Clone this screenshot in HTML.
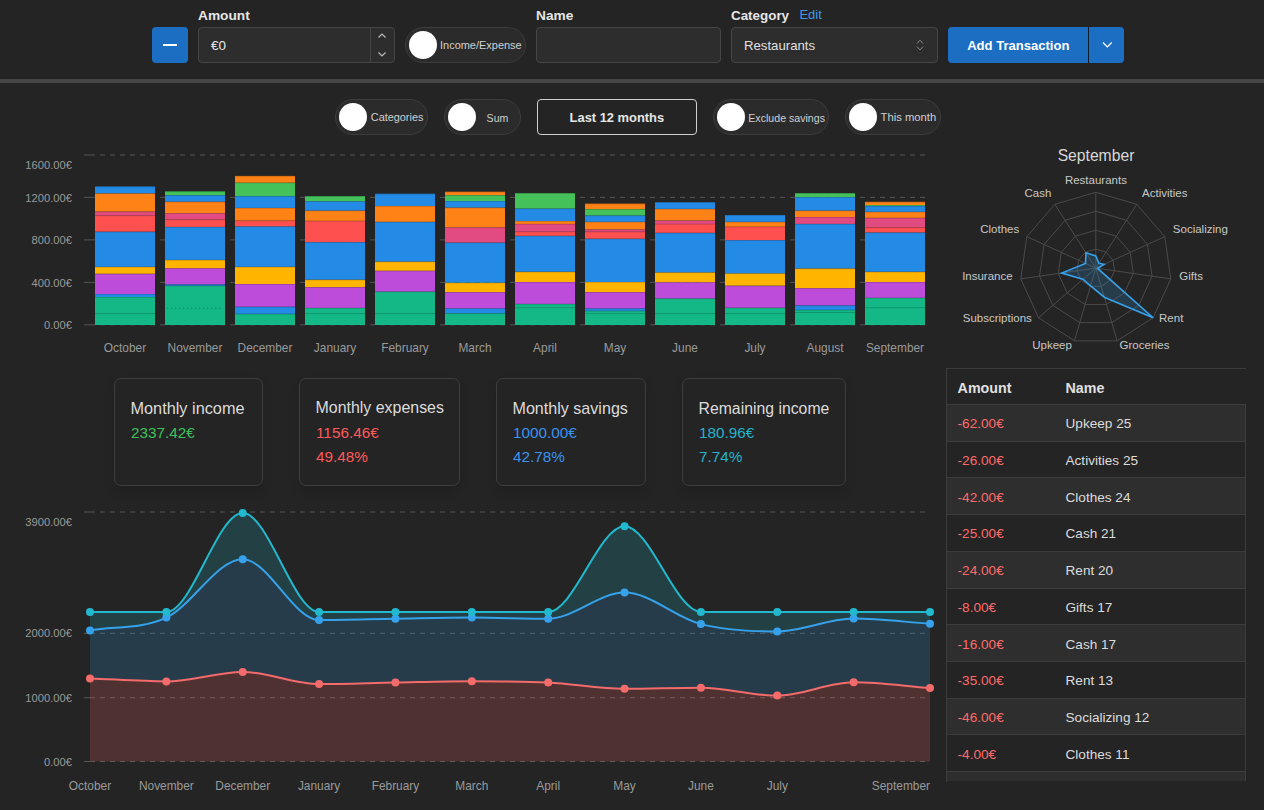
<!DOCTYPE html><html><head><meta charset="utf-8"><style>
html,body{margin:0;padding:0;}
body{width:1264px;height:810px;overflow:hidden;background:#242424;font-family:"Liberation Sans", sans-serif;position:relative;}
svg text{font-family:"Liberation Sans", sans-serif;}
</style></head><body>
<div style="position:absolute;left:198.00px;top:8.90px;font-size:13.7px;line-height:13.7px;color:#e6e6e6;font-weight:bold;white-space:nowrap;">Amount</div>
<div style="position:absolute;left:536.00px;top:8.90px;font-size:13.7px;line-height:13.7px;color:#e6e6e6;font-weight:bold;white-space:nowrap;">Name</div>
<div style="position:absolute;left:731.00px;top:9.16px;font-size:13.4px;line-height:13.4px;color:#e6e6e6;font-weight:bold;white-space:nowrap;">Category</div>
<div style="position:absolute;left:799.50px;top:8.78px;font-size:12.9px;line-height:12.9px;color:#3d9be9;white-space:nowrap;">Edit</div>
<div style="position:absolute;left:152px;top:27px;width:36px;height:36px;background:#1b6ec2;border-radius:4px;"></div>
<div style="position:absolute;left:163px;top:44px;width:14px;height:2px;background:#fff;"></div>
<div style="position:absolute;left:198px;top:27px;width:195px;height:34px;background:#2d2d2d;border:1px solid #454545;border-radius:4px;"></div>
<div style="position:absolute;left:370px;top:28px;width:1px;height:34px;background:#454545;"></div>
<div style="position:absolute;left:211.00px;top:39.07px;font-size:13.5px;line-height:13.5px;color:#e8e8e8;white-space:nowrap;">€0</div>
<svg style="position:absolute;left:374px;top:28px" width="18" height="34"><path d="M4.5 9.5 L8 6 L11.5 9.5" fill="none" stroke="#bbb" stroke-width="1.2"/><path d="M4.5 24.5 L8 28 L11.5 24.5" fill="none" stroke="#bbb" stroke-width="1.2"/></svg>
<div style="position:absolute;left:405px;top:27px;width:119px;height:34px;background:#2b2b2b;border:1px solid #3c3c3c;border-radius:18px;"></div>
<div style="position:absolute;left:408.6px;top:30.8px;width:28px;height:28px;background:#fff;border-radius:50%;"></div>
<div style="position:absolute;left:440.00px;top:40.41px;font-size:10.97px;line-height:10.97px;color:#d0d0d0;white-space:nowrap;">Income/Expense</div>
<div style="position:absolute;left:536px;top:27px;width:183px;height:34px;background:#2d2d2d;border:1px solid #454545;border-radius:4px;"></div>
<div style="position:absolute;left:731px;top:27px;width:205px;height:34px;background:#2d2d2d;border:1px solid #454545;border-radius:4px;"></div>
<div style="position:absolute;left:744.00px;top:39.33px;font-size:13.2px;line-height:13.2px;color:#e0e0e0;white-space:nowrap;">Restaurants</div>
<svg style="position:absolute;left:912px;top:36px" width="14" height="18"><path d="M5 7.5 L8 4.2 L11 7.5" fill="none" stroke="#8a8a8a" stroke-width="1"/><path d="M5 10.6 L8 13.9 L11 10.6" fill="none" stroke="#8a8a8a" stroke-width="1"/></svg>
<div style="position:absolute;left:948px;top:27px;width:176px;height:36px;background:#1b6ec2;border-radius:4px;"></div>
<div style="position:absolute;left:1088px;top:27px;width:1.3px;height:36px;background:#111d2b;"></div>
<div style="position:absolute;left:967.20px;top:39.25px;font-size:13.05px;line-height:13.05px;color:#ffffff;font-weight:bold;white-space:nowrap;">Add Transaction</div>
<svg style="position:absolute;left:1098px;top:38px" width="16" height="14"><path d="M5 4.5 L9.3 9 L13.7 4.5" fill="none" stroke="#fff" stroke-width="1.2"/></svg>
<div style="position:absolute;left:0px;top:79px;width:1264px;height:4px;background:#454545;"></div>
<div style="position:absolute;left:335px;top:99px;width:91px;height:34px;background:#2b2b2b;border:1px solid #3c3c3c;border-radius:18px;"></div>
<div style="position:absolute;left:338.6px;top:102.8px;width:28px;height:28px;background:#fff;border-radius:50%;"></div>
<div style="position:absolute;left:370.80px;top:112.49px;font-size:10.88px;line-height:10.88px;color:#d0d0d0;white-space:nowrap;">Categories</div>
<div style="position:absolute;left:444px;top:99px;width:75px;height:34px;background:#2b2b2b;border:1px solid #3c3c3c;border-radius:18px;"></div>
<div style="position:absolute;left:447.6px;top:102.8px;width:28px;height:28px;background:#fff;border-radius:50%;"></div>
<div style="position:absolute;left:486.60px;top:112.77px;font-size:10.55px;line-height:10.55px;color:#d0d0d0;white-space:nowrap;">Sum</div>
<div style="position:absolute;left:537px;top:99px;width:158px;height:34px;border:1px solid #cfcfcf;border-radius:4px;"></div>
<div style="position:absolute;left:569.60px;top:111.88px;font-size:12.9px;line-height:12.9px;color:#e6e6e6;font-weight:bold;white-space:nowrap;">Last 12 months</div>
<div style="position:absolute;left:713px;top:99px;width:114px;height:34px;background:#2b2b2b;border:1px solid #3c3c3c;border-radius:18px;"></div>
<div style="position:absolute;left:716.6px;top:102.8px;width:28px;height:28px;background:#fff;border-radius:50%;"></div>
<div style="position:absolute;left:748.30px;top:112.72px;font-size:10.61px;line-height:10.61px;color:#d0d0d0;white-space:nowrap;">Exclude savings</div>
<div style="position:absolute;left:845px;top:99px;width:94px;height:34px;background:#2b2b2b;border:1px solid #3c3c3c;border-radius:18px;"></div>
<div style="position:absolute;left:848.6px;top:102.8px;width:28px;height:28px;background:#fff;border-radius:50%;"></div>
<div style="position:absolute;left:880.60px;top:112.19px;font-size:11.24px;line-height:11.24px;color:#d0d0d0;white-space:nowrap;">This month</div>
<svg style="position:absolute;left:0;top:0" width="1264" height="810">
<line x1="84" y1="155.0" x2="90" y2="155.0" stroke="#555555" stroke-width="1"/>
<line x1="90" y1="155.0" x2="930" y2="155.0" stroke="#555555" stroke-width="1" stroke-dasharray="5 5"/>
<line x1="84" y1="197.4" x2="90" y2="197.4" stroke="#555555" stroke-width="1"/>
<line x1="90" y1="197.4" x2="930" y2="197.4" stroke="#555555" stroke-width="1" stroke-dasharray="5 5"/>
<line x1="84" y1="239.9" x2="90" y2="239.9" stroke="#555555" stroke-width="1"/>
<line x1="90" y1="239.9" x2="930" y2="239.9" stroke="#555555" stroke-width="1" stroke-dasharray="5 5"/>
<line x1="84" y1="282.4" x2="90" y2="282.4" stroke="#555555" stroke-width="1"/>
<line x1="90" y1="282.4" x2="930" y2="282.4" stroke="#555555" stroke-width="1" stroke-dasharray="5 5"/>
<line x1="84" y1="324.8" x2="90" y2="324.8" stroke="#555555" stroke-width="1"/>
<line x1="90" y1="324.8" x2="930" y2="324.8" stroke="#555555" stroke-width="1" stroke-dasharray="5 5"/>
<rect x="95" y="297.00" width="60" height="28.00" fill="#14b886"/>
<rect x="95" y="297.00" width="60" height="0.8" fill="rgba(0,0,0,0.18)"/>
<rect x="95" y="294.00" width="60" height="3.00" fill="#238ae6"/>
<rect x="95" y="294.00" width="60" height="0.8" fill="rgba(0,0,0,0.18)"/>
<rect x="95" y="273.70" width="60" height="20.30" fill="#bd4cdb"/>
<rect x="95" y="273.70" width="60" height="0.8" fill="rgba(0,0,0,0.18)"/>
<rect x="95" y="266.80" width="60" height="6.90" fill="#ffb400"/>
<rect x="95" y="266.80" width="60" height="0.8" fill="rgba(0,0,0,0.18)"/>
<rect x="95" y="231.60" width="60" height="35.20" fill="#238ae6"/>
<rect x="95" y="231.60" width="60" height="0.8" fill="rgba(0,0,0,0.18)"/>
<rect x="95" y="215.40" width="60" height="16.20" fill="#ff5050"/>
<rect x="95" y="215.40" width="60" height="0.8" fill="rgba(0,0,0,0.18)"/>
<rect x="95" y="211.50" width="60" height="3.90" fill="#e24a82"/>
<rect x="95" y="211.50" width="60" height="0.8" fill="rgba(0,0,0,0.18)"/>
<rect x="95" y="193.30" width="60" height="18.20" fill="#ff8216"/>
<rect x="95" y="193.30" width="60" height="0.8" fill="rgba(0,0,0,0.18)"/>
<rect x="95" y="186.40" width="60" height="6.90" fill="#238ae6"/>
<rect x="95" y="186.40" width="60" height="0.8" fill="rgba(0,0,0,0.18)"/>
<rect x="95" y="313.20" width="60" height="0.9" fill="rgba(0,0,0,0.2)"/>
<rect x="165" y="285.60" width="60" height="39.40" fill="#14b886"/>
<rect x="165" y="285.60" width="60" height="0.8" fill="rgba(0,0,0,0.18)"/>
<rect x="165" y="284.20" width="60" height="1.40" fill="#238ae6"/>
<rect x="165" y="284.20" width="60" height="0.8" fill="rgba(0,0,0,0.18)"/>
<rect x="165" y="268.20" width="60" height="16.00" fill="#bd4cdb"/>
<rect x="165" y="268.20" width="60" height="0.8" fill="rgba(0,0,0,0.18)"/>
<rect x="165" y="259.90" width="60" height="8.30" fill="#ffb400"/>
<rect x="165" y="259.90" width="60" height="0.8" fill="rgba(0,0,0,0.18)"/>
<rect x="165" y="226.90" width="60" height="33.00" fill="#238ae6"/>
<rect x="165" y="226.90" width="60" height="0.8" fill="rgba(0,0,0,0.18)"/>
<rect x="165" y="219.40" width="60" height="7.50" fill="#ff5050"/>
<rect x="165" y="219.40" width="60" height="0.8" fill="rgba(0,0,0,0.18)"/>
<rect x="165" y="213.10" width="60" height="6.30" fill="#e24a82"/>
<rect x="165" y="213.10" width="60" height="0.8" fill="rgba(0,0,0,0.18)"/>
<rect x="165" y="201.60" width="60" height="11.50" fill="#ff8216"/>
<rect x="165" y="201.60" width="60" height="0.8" fill="rgba(0,0,0,0.18)"/>
<rect x="165" y="195.10" width="60" height="6.50" fill="#238ae6"/>
<rect x="165" y="195.10" width="60" height="0.8" fill="rgba(0,0,0,0.18)"/>
<rect x="165" y="191.30" width="60" height="3.80" fill="#45c15a"/>
<rect x="165" y="191.30" width="60" height="0.8" fill="rgba(0,0,0,0.18)"/>
<line x1="167" y1="308.30" x2="223" y2="308.30" stroke="rgba(0,0,0,0.25)" stroke-width="1" stroke-dasharray="1.5 2.5"/>
<rect x="235" y="313.80" width="60" height="11.20" fill="#14b886"/>
<rect x="235" y="313.80" width="60" height="0.8" fill="rgba(0,0,0,0.18)"/>
<rect x="235" y="306.70" width="60" height="7.10" fill="#238ae6"/>
<rect x="235" y="306.70" width="60" height="0.8" fill="rgba(0,0,0,0.18)"/>
<rect x="235" y="284.00" width="60" height="22.70" fill="#bd4cdb"/>
<rect x="235" y="284.00" width="60" height="0.8" fill="rgba(0,0,0,0.18)"/>
<rect x="235" y="266.80" width="60" height="17.20" fill="#ffb400"/>
<rect x="235" y="266.80" width="60" height="0.8" fill="rgba(0,0,0,0.18)"/>
<rect x="235" y="226.30" width="60" height="40.50" fill="#238ae6"/>
<rect x="235" y="226.30" width="60" height="0.8" fill="rgba(0,0,0,0.18)"/>
<rect x="235" y="220.40" width="60" height="5.90" fill="#ff5050"/>
<rect x="235" y="220.40" width="60" height="0.8" fill="rgba(0,0,0,0.18)"/>
<rect x="235" y="207.90" width="60" height="12.50" fill="#ff8216"/>
<rect x="235" y="207.90" width="60" height="0.8" fill="rgba(0,0,0,0.18)"/>
<rect x="235" y="196.10" width="60" height="11.80" fill="#238ae6"/>
<rect x="235" y="196.10" width="60" height="0.8" fill="rgba(0,0,0,0.18)"/>
<rect x="235" y="182.60" width="60" height="13.50" fill="#45c15a"/>
<rect x="235" y="182.60" width="60" height="0.8" fill="rgba(0,0,0,0.18)"/>
<rect x="235" y="175.90" width="60" height="6.70" fill="#ff8216"/>
<rect x="235" y="175.90" width="60" height="0.8" fill="rgba(0,0,0,0.18)"/>
<rect x="305" y="307.90" width="60" height="17.10" fill="#14b886"/>
<rect x="305" y="307.90" width="60" height="0.8" fill="rgba(0,0,0,0.18)"/>
<rect x="305" y="287.10" width="60" height="20.80" fill="#bd4cdb"/>
<rect x="305" y="287.10" width="60" height="0.8" fill="rgba(0,0,0,0.18)"/>
<rect x="305" y="279.60" width="60" height="7.50" fill="#ffb400"/>
<rect x="305" y="279.60" width="60" height="0.8" fill="rgba(0,0,0,0.18)"/>
<rect x="305" y="242.10" width="60" height="37.50" fill="#238ae6"/>
<rect x="305" y="242.10" width="60" height="0.8" fill="rgba(0,0,0,0.18)"/>
<rect x="305" y="220.80" width="60" height="21.30" fill="#ff5050"/>
<rect x="305" y="220.80" width="60" height="0.8" fill="rgba(0,0,0,0.18)"/>
<rect x="305" y="210.50" width="60" height="10.30" fill="#ff8216"/>
<rect x="305" y="210.50" width="60" height="0.8" fill="rgba(0,0,0,0.18)"/>
<rect x="305" y="201.20" width="60" height="9.30" fill="#238ae6"/>
<rect x="305" y="201.20" width="60" height="0.8" fill="rgba(0,0,0,0.18)"/>
<rect x="305" y="196.10" width="60" height="5.10" fill="#45c15a"/>
<rect x="305" y="196.10" width="60" height="0.8" fill="rgba(0,0,0,0.18)"/>
<rect x="305" y="313.20" width="60" height="0.9" fill="rgba(0,0,0,0.2)"/>
<rect x="375" y="291.50" width="60" height="33.50" fill="#14b886"/>
<rect x="375" y="291.50" width="60" height="0.8" fill="rgba(0,0,0,0.18)"/>
<rect x="375" y="270.70" width="60" height="20.80" fill="#bd4cdb"/>
<rect x="375" y="270.70" width="60" height="0.8" fill="rgba(0,0,0,0.18)"/>
<rect x="375" y="261.50" width="60" height="9.20" fill="#ffb400"/>
<rect x="375" y="261.50" width="60" height="0.8" fill="rgba(0,0,0,0.18)"/>
<rect x="375" y="221.80" width="60" height="39.70" fill="#238ae6"/>
<rect x="375" y="221.80" width="60" height="0.8" fill="rgba(0,0,0,0.18)"/>
<rect x="375" y="206.00" width="60" height="15.80" fill="#ff8216"/>
<rect x="375" y="206.00" width="60" height="0.8" fill="rgba(0,0,0,0.18)"/>
<rect x="375" y="193.70" width="60" height="12.30" fill="#238ae6"/>
<rect x="375" y="193.70" width="60" height="0.8" fill="rgba(0,0,0,0.18)"/>
<rect x="375" y="313.20" width="60" height="0.9" fill="rgba(0,0,0,0.2)"/>
<rect x="445" y="313.20" width="60" height="11.80" fill="#14b886"/>
<rect x="445" y="313.20" width="60" height="0.8" fill="rgba(0,0,0,0.18)"/>
<rect x="445" y="308.30" width="60" height="4.90" fill="#238ae6"/>
<rect x="445" y="308.30" width="60" height="0.8" fill="rgba(0,0,0,0.18)"/>
<rect x="445" y="292.10" width="60" height="16.20" fill="#bd4cdb"/>
<rect x="445" y="292.10" width="60" height="0.8" fill="rgba(0,0,0,0.18)"/>
<rect x="445" y="282.60" width="60" height="9.50" fill="#ffb400"/>
<rect x="445" y="282.60" width="60" height="0.8" fill="rgba(0,0,0,0.18)"/>
<rect x="445" y="242.50" width="60" height="40.10" fill="#238ae6"/>
<rect x="445" y="242.50" width="60" height="0.8" fill="rgba(0,0,0,0.18)"/>
<rect x="445" y="227.30" width="60" height="15.20" fill="#e24a82"/>
<rect x="445" y="227.30" width="60" height="0.8" fill="rgba(0,0,0,0.18)"/>
<rect x="445" y="207.50" width="60" height="19.80" fill="#ff8216"/>
<rect x="445" y="207.50" width="60" height="0.8" fill="rgba(0,0,0,0.18)"/>
<rect x="445" y="201.00" width="60" height="6.50" fill="#238ae6"/>
<rect x="445" y="201.00" width="60" height="0.8" fill="rgba(0,0,0,0.18)"/>
<rect x="445" y="195.10" width="60" height="5.90" fill="#45c15a"/>
<rect x="445" y="195.10" width="60" height="0.8" fill="rgba(0,0,0,0.18)"/>
<rect x="445" y="191.70" width="60" height="3.40" fill="#ff8216"/>
<rect x="445" y="191.70" width="60" height="0.8" fill="rgba(0,0,0,0.18)"/>
<rect x="515" y="303.90" width="60" height="21.10" fill="#14b886"/>
<rect x="515" y="303.90" width="60" height="0.8" fill="rgba(0,0,0,0.18)"/>
<rect x="515" y="282.00" width="60" height="21.90" fill="#bd4cdb"/>
<rect x="515" y="282.00" width="60" height="0.8" fill="rgba(0,0,0,0.18)"/>
<rect x="515" y="271.70" width="60" height="10.30" fill="#ffb400"/>
<rect x="515" y="271.70" width="60" height="0.8" fill="rgba(0,0,0,0.18)"/>
<rect x="515" y="235.80" width="60" height="35.90" fill="#238ae6"/>
<rect x="515" y="235.80" width="60" height="0.8" fill="rgba(0,0,0,0.18)"/>
<rect x="515" y="231.60" width="60" height="4.20" fill="#ff5050"/>
<rect x="515" y="231.60" width="60" height="0.8" fill="rgba(0,0,0,0.18)"/>
<rect x="515" y="223.90" width="60" height="7.70" fill="#e24a82"/>
<rect x="515" y="223.90" width="60" height="0.8" fill="rgba(0,0,0,0.18)"/>
<rect x="515" y="221.00" width="60" height="2.90" fill="#ff8216"/>
<rect x="515" y="221.00" width="60" height="0.8" fill="rgba(0,0,0,0.18)"/>
<rect x="515" y="208.50" width="60" height="12.50" fill="#238ae6"/>
<rect x="515" y="208.50" width="60" height="0.8" fill="rgba(0,0,0,0.18)"/>
<rect x="515" y="193.10" width="60" height="15.40" fill="#45c15a"/>
<rect x="515" y="193.10" width="60" height="0.8" fill="rgba(0,0,0,0.18)"/>
<rect x="515" y="307.30" width="60" height="0.9" fill="rgba(0,0,0,0.2)"/>
<rect x="585" y="310.80" width="60" height="14.20" fill="#14b886"/>
<rect x="585" y="310.80" width="60" height="0.8" fill="rgba(0,0,0,0.18)"/>
<rect x="585" y="308.30" width="60" height="2.50" fill="#238ae6"/>
<rect x="585" y="308.30" width="60" height="0.8" fill="rgba(0,0,0,0.18)"/>
<rect x="585" y="292.10" width="60" height="16.20" fill="#bd4cdb"/>
<rect x="585" y="292.10" width="60" height="0.8" fill="rgba(0,0,0,0.18)"/>
<rect x="585" y="282.00" width="60" height="10.10" fill="#ffb400"/>
<rect x="585" y="282.00" width="60" height="0.8" fill="rgba(0,0,0,0.18)"/>
<rect x="585" y="238.70" width="60" height="43.30" fill="#238ae6"/>
<rect x="585" y="238.70" width="60" height="0.8" fill="rgba(0,0,0,0.18)"/>
<rect x="585" y="231.60" width="60" height="7.10" fill="#ff5050"/>
<rect x="585" y="231.60" width="60" height="0.8" fill="rgba(0,0,0,0.18)"/>
<rect x="585" y="229.30" width="60" height="2.30" fill="#e24a82"/>
<rect x="585" y="229.30" width="60" height="0.8" fill="rgba(0,0,0,0.18)"/>
<rect x="585" y="221.80" width="60" height="7.50" fill="#ff8216"/>
<rect x="585" y="221.80" width="60" height="0.8" fill="rgba(0,0,0,0.18)"/>
<rect x="585" y="215.40" width="60" height="6.40" fill="#238ae6"/>
<rect x="585" y="215.40" width="60" height="0.8" fill="rgba(0,0,0,0.18)"/>
<rect x="585" y="209.10" width="60" height="6.30" fill="#45c15a"/>
<rect x="585" y="209.10" width="60" height="0.8" fill="rgba(0,0,0,0.18)"/>
<rect x="585" y="203.60" width="60" height="5.50" fill="#ff8216"/>
<rect x="585" y="203.60" width="60" height="0.8" fill="rgba(0,0,0,0.18)"/>
<rect x="585" y="313.20" width="60" height="0.9" fill="rgba(0,0,0,0.2)"/>
<rect x="655" y="298.40" width="60" height="26.60" fill="#14b886"/>
<rect x="655" y="298.40" width="60" height="0.8" fill="rgba(0,0,0,0.18)"/>
<rect x="655" y="282.20" width="60" height="16.20" fill="#bd4cdb"/>
<rect x="655" y="282.20" width="60" height="0.8" fill="rgba(0,0,0,0.18)"/>
<rect x="655" y="272.30" width="60" height="9.90" fill="#ffb400"/>
<rect x="655" y="272.30" width="60" height="0.8" fill="rgba(0,0,0,0.18)"/>
<rect x="655" y="232.80" width="60" height="39.50" fill="#238ae6"/>
<rect x="655" y="232.80" width="60" height="0.8" fill="rgba(0,0,0,0.18)"/>
<rect x="655" y="223.90" width="60" height="8.90" fill="#ff5050"/>
<rect x="655" y="223.90" width="60" height="0.8" fill="rgba(0,0,0,0.18)"/>
<rect x="655" y="220.40" width="60" height="3.50" fill="#e24a82"/>
<rect x="655" y="220.40" width="60" height="0.8" fill="rgba(0,0,0,0.18)"/>
<rect x="655" y="208.90" width="60" height="11.50" fill="#ff8216"/>
<rect x="655" y="208.90" width="60" height="0.8" fill="rgba(0,0,0,0.18)"/>
<rect x="655" y="202.20" width="60" height="6.70" fill="#238ae6"/>
<rect x="655" y="202.20" width="60" height="0.8" fill="rgba(0,0,0,0.18)"/>
<rect x="655" y="313.20" width="60" height="0.9" fill="rgba(0,0,0,0.2)"/>
<rect x="725" y="307.70" width="60" height="17.30" fill="#14b886"/>
<rect x="725" y="307.70" width="60" height="0.8" fill="rgba(0,0,0,0.18)"/>
<rect x="725" y="285.60" width="60" height="22.10" fill="#bd4cdb"/>
<rect x="725" y="285.60" width="60" height="0.8" fill="rgba(0,0,0,0.18)"/>
<rect x="725" y="273.30" width="60" height="12.30" fill="#ffb400"/>
<rect x="725" y="273.30" width="60" height="0.8" fill="rgba(0,0,0,0.18)"/>
<rect x="725" y="240.10" width="60" height="33.20" fill="#238ae6"/>
<rect x="725" y="240.10" width="60" height="0.8" fill="rgba(0,0,0,0.18)"/>
<rect x="725" y="226.70" width="60" height="13.40" fill="#ff5050"/>
<rect x="725" y="226.70" width="60" height="0.8" fill="rgba(0,0,0,0.18)"/>
<rect x="725" y="221.80" width="60" height="4.90" fill="#ff8216"/>
<rect x="725" y="221.80" width="60" height="0.8" fill="rgba(0,0,0,0.18)"/>
<rect x="725" y="215.00" width="60" height="6.80" fill="#238ae6"/>
<rect x="725" y="215.00" width="60" height="0.8" fill="rgba(0,0,0,0.18)"/>
<rect x="725" y="313.20" width="60" height="0.9" fill="rgba(0,0,0,0.2)"/>
<rect x="795" y="309.90" width="60" height="15.10" fill="#14b886"/>
<rect x="795" y="309.90" width="60" height="0.8" fill="rgba(0,0,0,0.18)"/>
<rect x="795" y="305.30" width="60" height="4.60" fill="#238ae6"/>
<rect x="795" y="305.30" width="60" height="0.8" fill="rgba(0,0,0,0.18)"/>
<rect x="795" y="288.10" width="60" height="17.20" fill="#bd4cdb"/>
<rect x="795" y="288.10" width="60" height="0.8" fill="rgba(0,0,0,0.18)"/>
<rect x="795" y="268.40" width="60" height="19.70" fill="#ffb400"/>
<rect x="795" y="268.40" width="60" height="0.8" fill="rgba(0,0,0,0.18)"/>
<rect x="795" y="223.90" width="60" height="44.50" fill="#238ae6"/>
<rect x="795" y="223.90" width="60" height="0.8" fill="rgba(0,0,0,0.18)"/>
<rect x="795" y="217.00" width="60" height="6.90" fill="#e24a82"/>
<rect x="795" y="217.00" width="60" height="0.8" fill="rgba(0,0,0,0.18)"/>
<rect x="795" y="210.50" width="60" height="6.50" fill="#ff8216"/>
<rect x="795" y="210.50" width="60" height="0.8" fill="rgba(0,0,0,0.18)"/>
<rect x="795" y="197.10" width="60" height="13.40" fill="#238ae6"/>
<rect x="795" y="197.10" width="60" height="0.8" fill="rgba(0,0,0,0.18)"/>
<rect x="795" y="193.10" width="60" height="4.00" fill="#45c15a"/>
<rect x="795" y="193.10" width="60" height="0.8" fill="rgba(0,0,0,0.18)"/>
<rect x="795" y="312.00" width="60" height="0.9" fill="rgba(0,0,0,0.2)"/>
<rect x="865" y="297.80" width="60" height="27.20" fill="#14b886"/>
<rect x="865" y="297.80" width="60" height="0.8" fill="rgba(0,0,0,0.18)"/>
<rect x="865" y="282.00" width="60" height="15.80" fill="#bd4cdb"/>
<rect x="865" y="282.00" width="60" height="0.8" fill="rgba(0,0,0,0.18)"/>
<rect x="865" y="271.70" width="60" height="10.30" fill="#ffb400"/>
<rect x="865" y="271.70" width="60" height="0.8" fill="rgba(0,0,0,0.18)"/>
<rect x="865" y="232.40" width="60" height="39.30" fill="#238ae6"/>
<rect x="865" y="232.40" width="60" height="0.8" fill="rgba(0,0,0,0.18)"/>
<rect x="865" y="227.30" width="60" height="5.10" fill="#ff5050"/>
<rect x="865" y="227.30" width="60" height="0.8" fill="rgba(0,0,0,0.18)"/>
<rect x="865" y="217.80" width="60" height="9.50" fill="#e24a82"/>
<rect x="865" y="217.80" width="60" height="0.8" fill="rgba(0,0,0,0.18)"/>
<rect x="865" y="211.80" width="60" height="6.00" fill="#ff8216"/>
<rect x="865" y="211.80" width="60" height="0.8" fill="rgba(0,0,0,0.18)"/>
<rect x="865" y="206.00" width="60" height="5.80" fill="#238ae6"/>
<rect x="865" y="206.00" width="60" height="0.8" fill="rgba(0,0,0,0.18)"/>
<rect x="865" y="205.00" width="60" height="1.00" fill="#45c15a"/>
<rect x="865" y="205.00" width="60" height="0.8" fill="rgba(0,0,0,0.18)"/>
<rect x="865" y="201.80" width="60" height="3.20" fill="#ff8216"/>
<rect x="865" y="201.80" width="60" height="0.8" fill="rgba(0,0,0,0.18)"/>
<rect x="865" y="307.30" width="60" height="0.9" fill="rgba(0,0,0,0.2)"/>
</svg>
<div style="position:absolute;left:-528.00px;width:600px;text-align:right;top:159.72px;font-size:11.2px;line-height:11.2px;color:#9a9a9a;white-space:nowrap;">1600.00€</div>
<div style="position:absolute;left:-528.00px;width:600px;text-align:right;top:192.52px;font-size:11.2px;line-height:11.2px;color:#9a9a9a;white-space:nowrap;">1200.00€</div>
<div style="position:absolute;left:-528.00px;width:600px;text-align:right;top:235.02px;font-size:11.2px;line-height:11.2px;color:#9a9a9a;white-space:nowrap;">800.00€</div>
<div style="position:absolute;left:-528.00px;width:600px;text-align:right;top:277.52px;font-size:11.2px;line-height:11.2px;color:#9a9a9a;white-space:nowrap;">400.00€</div>
<div style="position:absolute;left:-528.00px;width:600px;text-align:right;top:319.92px;font-size:11.2px;line-height:11.2px;color:#9a9a9a;white-space:nowrap;">0.00€</div>
<div style="position:absolute;left:-175.00px;width:600px;text-align:center;top:342.63px;font-size:11.9px;line-height:11.9px;color:#9a9a9a;white-space:nowrap;">October</div>
<div style="position:absolute;left:-105.00px;width:600px;text-align:center;top:342.63px;font-size:11.9px;line-height:11.9px;color:#9a9a9a;white-space:nowrap;">November</div>
<div style="position:absolute;left:-35.00px;width:600px;text-align:center;top:342.63px;font-size:11.9px;line-height:11.9px;color:#9a9a9a;white-space:nowrap;">December</div>
<div style="position:absolute;left:35.00px;width:600px;text-align:center;top:342.63px;font-size:11.9px;line-height:11.9px;color:#9a9a9a;white-space:nowrap;">January</div>
<div style="position:absolute;left:105.00px;width:600px;text-align:center;top:342.63px;font-size:11.9px;line-height:11.9px;color:#9a9a9a;white-space:nowrap;">February</div>
<div style="position:absolute;left:175.00px;width:600px;text-align:center;top:342.63px;font-size:11.9px;line-height:11.9px;color:#9a9a9a;white-space:nowrap;">March</div>
<div style="position:absolute;left:245.00px;width:600px;text-align:center;top:342.63px;font-size:11.9px;line-height:11.9px;color:#9a9a9a;white-space:nowrap;">April</div>
<div style="position:absolute;left:315.00px;width:600px;text-align:center;top:342.63px;font-size:11.9px;line-height:11.9px;color:#9a9a9a;white-space:nowrap;">May</div>
<div style="position:absolute;left:385.00px;width:600px;text-align:center;top:342.63px;font-size:11.9px;line-height:11.9px;color:#9a9a9a;white-space:nowrap;">June</div>
<div style="position:absolute;left:455.00px;width:600px;text-align:center;top:342.63px;font-size:11.9px;line-height:11.9px;color:#9a9a9a;white-space:nowrap;">July</div>
<div style="position:absolute;left:525.00px;width:600px;text-align:center;top:342.63px;font-size:11.9px;line-height:11.9px;color:#9a9a9a;white-space:nowrap;">August</div>
<div style="position:absolute;left:595.00px;width:600px;text-align:center;top:342.63px;font-size:11.9px;line-height:11.9px;color:#9a9a9a;white-space:nowrap;">September</div>
<svg style="position:absolute;left:0;top:0" width="1264" height="810">
<polygon points="1095.80,249.15 1106.05,252.16 1113.04,260.23 1114.56,270.80 1110.12,280.51 1101.14,286.28 1090.46,286.28 1081.48,280.51 1077.04,270.80 1078.56,260.23 1085.55,252.16" fill="none" stroke="#4a4a4a" stroke-width="1"/>
<polygon points="1095.80,230.20 1116.29,236.22 1130.28,252.36 1133.31,273.49 1124.44,292.92 1106.48,304.46 1085.12,304.46 1067.16,292.92 1058.29,273.49 1061.32,252.36 1075.31,236.22" fill="none" stroke="#4a4a4a" stroke-width="1"/>
<polygon points="1095.80,211.25 1126.54,220.27 1147.51,244.48 1152.07,276.19 1138.76,305.33 1111.82,322.65 1079.78,322.65 1052.84,305.33 1039.53,276.19 1044.09,244.48 1065.06,220.27" fill="none" stroke="#4a4a4a" stroke-width="1"/>
<polygon points="1095.80,192.30 1136.78,204.33 1164.75,236.61 1170.83,278.89 1153.09,317.74 1117.16,340.83 1074.44,340.83 1038.51,317.74 1020.77,278.89 1026.85,236.61 1054.82,204.33" fill="none" stroke="#4a4a4a" stroke-width="1"/>
<line x1="1095.8" y1="268.1" x2="1095.80" y2="192.30" stroke="#4a4a4a" stroke-width="1"/>
<line x1="1095.8" y1="268.1" x2="1136.78" y2="204.33" stroke="#4a4a4a" stroke-width="1"/>
<line x1="1095.8" y1="268.1" x2="1164.75" y2="236.61" stroke="#4a4a4a" stroke-width="1"/>
<line x1="1095.8" y1="268.1" x2="1170.83" y2="278.89" stroke="#4a4a4a" stroke-width="1"/>
<line x1="1095.8" y1="268.1" x2="1153.09" y2="317.74" stroke="#4a4a4a" stroke-width="1"/>
<line x1="1095.8" y1="268.1" x2="1117.16" y2="340.83" stroke="#4a4a4a" stroke-width="1"/>
<line x1="1095.8" y1="268.1" x2="1074.44" y2="340.83" stroke="#4a4a4a" stroke-width="1"/>
<line x1="1095.8" y1="268.1" x2="1038.51" y2="317.74" stroke="#4a4a4a" stroke-width="1"/>
<line x1="1095.8" y1="268.1" x2="1020.77" y2="278.89" stroke="#4a4a4a" stroke-width="1"/>
<line x1="1095.8" y1="268.1" x2="1026.85" y2="236.61" stroke="#4a4a4a" stroke-width="1"/>
<line x1="1095.8" y1="268.1" x2="1054.82" y2="204.33" stroke="#4a4a4a" stroke-width="1"/>
<polygon points="1095.80,255.97 1098.87,263.32 1104.07,264.32 1097.68,268.37 1153.09,317.74 1104.34,297.19 1090.57,285.92 1082.91,279.27 1061.66,273.01 1085.46,263.38 1085.96,252.80" fill="rgba(54,162,235,0.2)" stroke="#36a2eb" stroke-width="1.6" stroke-linejoin="miter"/>
</svg>
<div style="position:absolute;left:796.00px;width:600px;text-align:center;top:148.41px;font-size:15.7px;line-height:15.7px;color:#d8d8d8;white-space:nowrap;">September</div>
<div style="position:absolute;left:795.90px;width:600px;text-align:center;top:174.77px;font-size:11.5px;line-height:11.5px;color:#c8c8c8;white-space:nowrap;">Restaurants</div>
<div style="position:absolute;left:864.75px;width:600px;text-align:center;top:187.77px;font-size:11.5px;line-height:11.5px;color:#c8c8c8;white-space:nowrap;">Activities</div>
<div style="position:absolute;left:900.35px;width:600px;text-align:center;top:223.97px;font-size:11.5px;line-height:11.5px;color:#c8c8c8;white-space:nowrap;">Socializing</div>
<div style="position:absolute;left:891.20px;width:600px;text-align:center;top:270.67px;font-size:11.5px;line-height:11.5px;color:#c8c8c8;white-space:nowrap;">Gifts</div>
<div style="position:absolute;left:871.20px;width:600px;text-align:center;top:313.27px;font-size:11.5px;line-height:11.5px;color:#c8c8c8;white-space:nowrap;">Rent</div>
<div style="position:absolute;left:844.50px;width:600px;text-align:center;top:339.87px;font-size:11.5px;line-height:11.5px;color:#c8c8c8;white-space:nowrap;">Groceries</div>
<div style="position:absolute;left:752.05px;width:600px;text-align:center;top:339.87px;font-size:11.5px;line-height:11.5px;color:#c8c8c8;white-space:nowrap;">Upkeep</div>
<div style="position:absolute;left:697.30px;width:600px;text-align:center;top:313.27px;font-size:11.5px;line-height:11.5px;color:#c8c8c8;white-space:nowrap;">Subscriptions</div>
<div style="position:absolute;left:687.40px;width:600px;text-align:center;top:270.67px;font-size:11.5px;line-height:11.5px;color:#c8c8c8;white-space:nowrap;">Insurance</div>
<div style="position:absolute;left:699.75px;width:600px;text-align:center;top:223.97px;font-size:11.5px;line-height:11.5px;color:#c8c8c8;white-space:nowrap;">Clothes</div>
<div style="position:absolute;left:737.90px;width:600px;text-align:center;top:187.77px;font-size:11.5px;line-height:11.5px;color:#c8c8c8;white-space:nowrap;">Cash</div>
<div style="position:absolute;left:114px;top:378px;width:147px;height:106px;border:1px solid #3e3e3e;border-radius:7px;box-shadow:0 5px 10px rgba(0,0,0,0.14);"></div>
<div style="position:absolute;left:130.50px;top:400.10px;font-size:16.3px;line-height:16.3px;color:#dcdcdc;white-space:nowrap;">Monthly income</div>
<div style="position:absolute;left:131.00px;top:424.55px;font-size:15.3px;line-height:15.3px;color:#3ec15a;white-space:nowrap;">2337.42€</div>
<div style="position:absolute;left:299px;top:378px;width:159px;height:106px;border:1px solid #3e3e3e;border-radius:7px;box-shadow:0 5px 10px rgba(0,0,0,0.14);"></div>
<div style="position:absolute;left:315.50px;top:400.40px;font-size:15.95px;line-height:15.95px;color:#dcdcdc;white-space:nowrap;">Monthly expenses</div>
<div style="position:absolute;left:316.00px;top:424.55px;font-size:15.3px;line-height:15.3px;color:#ff5a5a;white-space:nowrap;">1156.46€</div>
<div style="position:absolute;left:316.00px;top:449.35px;font-size:15.3px;line-height:15.3px;color:#ff5a5a;white-space:nowrap;">49.48%</div>
<div style="position:absolute;left:496px;top:378px;width:148px;height:106px;border:1px solid #3e3e3e;border-radius:7px;box-shadow:0 5px 10px rgba(0,0,0,0.14);"></div>
<div style="position:absolute;left:512.50px;top:400.27px;font-size:16.1px;line-height:16.1px;color:#dcdcdc;white-space:nowrap;">Monthly savings</div>
<div style="position:absolute;left:513.00px;top:424.55px;font-size:15.3px;line-height:15.3px;color:#3a93ee;white-space:nowrap;">1000.00€</div>
<div style="position:absolute;left:513.00px;top:449.35px;font-size:15.3px;line-height:15.3px;color:#3a93ee;white-space:nowrap;">42.78%</div>
<div style="position:absolute;left:682px;top:378px;width:162px;height:106px;border:1px solid #3e3e3e;border-radius:7px;box-shadow:0 5px 10px rgba(0,0,0,0.14);"></div>
<div style="position:absolute;left:698.50px;top:400.53px;font-size:15.8px;line-height:15.8px;color:#dcdcdc;white-space:nowrap;">Remaining income</div>
<div style="position:absolute;left:699.00px;top:424.55px;font-size:15.3px;line-height:15.3px;color:#23b3cc;white-space:nowrap;">180.96€</div>
<div style="position:absolute;left:699.00px;top:449.35px;font-size:15.3px;line-height:15.3px;color:#23b3cc;white-space:nowrap;">7.74%</div>
<svg style="position:absolute;left:0;top:0" width="1264" height="810">
<line x1="84" y1="512.0" x2="90" y2="512.0" stroke="#555555" stroke-width="1"/>
<line x1="90" y1="512.0" x2="930" y2="512.0" stroke="#555555" stroke-width="1" stroke-dasharray="5 5"/>
<line x1="84" y1="633.3" x2="90" y2="633.3" stroke="#555555" stroke-width="1"/>
<line x1="90" y1="633.3" x2="930" y2="633.3" stroke="#555555" stroke-width="1" stroke-dasharray="5 5"/>
<line x1="84" y1="697.7" x2="90" y2="697.7" stroke="#555555" stroke-width="1"/>
<line x1="90" y1="697.7" x2="930" y2="697.7" stroke="#555555" stroke-width="1" stroke-dasharray="5 5"/>
<line x1="84" y1="761.5" x2="90" y2="761.5" stroke="#555555" stroke-width="1"/>
<line x1="90" y1="761.5" x2="930" y2="761.5" stroke="#555555" stroke-width="1" stroke-dasharray="5 5"/>
<path d="M90.00,611.90 C115.45,611.90 140.91,611.90 166.36,611.90 C191.82,611.90 217.27,513.00 242.73,513.00 C268.18,513.00 293.64,611.90 319.09,611.90 C344.55,611.90 370.00,611.90 395.45,611.90 C420.91,611.90 446.36,611.90 471.82,611.90 C497.27,611.90 522.73,611.90 548.18,611.90 C573.64,611.90 599.09,526.30 624.55,526.30 C650.00,526.30 675.45,611.80 700.91,611.90 C726.36,612.00 751.82,612.00 777.27,612.00 C802.73,612.00 828.18,612.00 853.64,612.00 C879.09,612.00 904.55,612.00 930.00,612.00 L930.00,623.70 C904.55,622.00 879.09,618.60 853.64,618.60 C828.18,618.60 802.73,631.50 777.27,631.50 C751.82,631.50 726.36,630.58 700.91,624.10 C675.45,617.62 650.00,592.60 624.55,592.60 C599.09,592.60 573.64,618.70 548.18,618.70 C522.73,618.70 497.27,617.60 471.82,617.60 C446.36,617.60 420.91,618.30 395.45,618.70 C370.00,619.10 344.55,620.00 319.09,620.00 C293.64,620.00 268.18,559.20 242.73,559.20 C217.27,559.20 191.82,605.73 166.36,617.60 C140.91,629.47 115.45,626.13 90.00,630.40 Z" fill="rgba(34,184,207,0.2)"/>
<path d="M90.00,630.40 C115.45,626.13 140.91,629.47 166.36,617.60 C191.82,605.73 217.27,559.20 242.73,559.20 C268.18,559.20 293.64,620.00 319.09,620.00 C344.55,620.00 370.00,619.10 395.45,618.70 C420.91,618.30 446.36,617.60 471.82,617.60 C497.27,617.60 522.73,618.70 548.18,618.70 C573.64,618.70 599.09,592.60 624.55,592.60 C650.00,592.60 675.45,617.62 700.91,624.10 C726.36,630.58 751.82,631.50 777.27,631.50 C802.73,631.50 828.18,618.60 853.64,618.60 C879.09,618.60 904.55,622.00 930.00,623.70 L930.00,688.00 C904.55,686.10 879.09,682.30 853.64,682.30 C828.18,682.30 802.73,695.60 777.27,695.60 C751.82,695.60 726.36,687.70 700.91,687.70 C675.45,687.70 650.00,688.80 624.55,688.80 C599.09,688.80 573.64,683.77 548.18,682.50 C522.73,681.23 497.27,681.20 471.82,681.20 C446.36,681.20 420.91,682.02 395.45,682.50 C370.00,682.98 344.55,684.10 319.09,684.10 C293.64,684.10 268.18,671.90 242.73,671.90 C217.27,671.90 191.82,681.40 166.36,681.40 C140.91,681.40 115.45,679.40 90.00,678.40 Z" fill="rgba(54,162,235,0.2)"/>
<path d="M90.00,678.40 C115.45,679.40 140.91,681.40 166.36,681.40 C191.82,681.40 217.27,671.90 242.73,671.90 C268.18,671.90 293.64,684.10 319.09,684.10 C344.55,684.10 370.00,682.98 395.45,682.50 C420.91,682.02 446.36,681.20 471.82,681.20 C497.27,681.20 522.73,681.23 548.18,682.50 C573.64,683.77 599.09,688.80 624.55,688.80 C650.00,688.80 675.45,687.70 700.91,687.70 C726.36,687.70 751.82,695.60 777.27,695.60 C802.73,695.60 828.18,682.30 853.64,682.30 C879.09,682.30 904.55,686.10 930.00,688.00 L930,761.5 L90,761.5 Z" fill="rgba(255,105,112,0.2)"/>
<path d="M90.00,678.40 C115.45,679.40 140.91,681.40 166.36,681.40 C191.82,681.40 217.27,671.90 242.73,671.90 C268.18,671.90 293.64,684.10 319.09,684.10 C344.55,684.10 370.00,682.98 395.45,682.50 C420.91,682.02 446.36,681.20 471.82,681.20 C497.27,681.20 522.73,681.23 548.18,682.50 C573.64,683.77 599.09,688.80 624.55,688.80 C650.00,688.80 675.45,687.70 700.91,687.70 C726.36,687.70 751.82,695.60 777.27,695.60 C802.73,695.60 828.18,682.30 853.64,682.30 C879.09,682.30 904.55,686.10 930.00,688.00" fill="none" stroke="#f36b6b" stroke-width="2"/>
<path d="M90.00,630.40 C115.45,626.13 140.91,629.47 166.36,617.60 C191.82,605.73 217.27,559.20 242.73,559.20 C268.18,559.20 293.64,620.00 319.09,620.00 C344.55,620.00 370.00,619.10 395.45,618.70 C420.91,618.30 446.36,617.60 471.82,617.60 C497.27,617.60 522.73,618.70 548.18,618.70 C573.64,618.70 599.09,592.60 624.55,592.60 C650.00,592.60 675.45,617.62 700.91,624.10 C726.36,630.58 751.82,631.50 777.27,631.50 C802.73,631.50 828.18,618.60 853.64,618.60 C879.09,618.60 904.55,622.00 930.00,623.70" fill="none" stroke="#36a2eb" stroke-width="2"/>
<path d="M90.00,611.90 C115.45,611.90 140.91,611.90 166.36,611.90 C191.82,611.90 217.27,513.00 242.73,513.00 C268.18,513.00 293.64,611.90 319.09,611.90 C344.55,611.90 370.00,611.90 395.45,611.90 C420.91,611.90 446.36,611.90 471.82,611.90 C497.27,611.90 522.73,611.90 548.18,611.90 C573.64,611.90 599.09,526.30 624.55,526.30 C650.00,526.30 675.45,611.80 700.91,611.90 C726.36,612.00 751.82,612.00 777.27,612.00 C802.73,612.00 828.18,612.00 853.64,612.00 C879.09,612.00 904.55,612.00 930.00,612.00" fill="none" stroke="#22b9cf" stroke-width="2"/>
<circle cx="90.00" cy="678.40" r="4" fill="#f36b6b"/>
<circle cx="166.36" cy="681.40" r="4" fill="#f36b6b"/>
<circle cx="242.73" cy="671.90" r="4" fill="#f36b6b"/>
<circle cx="319.09" cy="684.10" r="4" fill="#f36b6b"/>
<circle cx="395.45" cy="682.50" r="4" fill="#f36b6b"/>
<circle cx="471.82" cy="681.20" r="4" fill="#f36b6b"/>
<circle cx="548.18" cy="682.50" r="4" fill="#f36b6b"/>
<circle cx="624.55" cy="688.80" r="4" fill="#f36b6b"/>
<circle cx="700.91" cy="687.70" r="4" fill="#f36b6b"/>
<circle cx="777.27" cy="695.60" r="4" fill="#f36b6b"/>
<circle cx="853.64" cy="682.30" r="4" fill="#f36b6b"/>
<circle cx="930.00" cy="688.00" r="4" fill="#f36b6b"/>
<circle cx="90.00" cy="630.40" r="4" fill="#36a2eb"/>
<circle cx="166.36" cy="617.60" r="4" fill="#36a2eb"/>
<circle cx="242.73" cy="559.20" r="4" fill="#36a2eb"/>
<circle cx="319.09" cy="620.00" r="4" fill="#36a2eb"/>
<circle cx="395.45" cy="618.70" r="4" fill="#36a2eb"/>
<circle cx="471.82" cy="617.60" r="4" fill="#36a2eb"/>
<circle cx="548.18" cy="618.70" r="4" fill="#36a2eb"/>
<circle cx="624.55" cy="592.60" r="4" fill="#36a2eb"/>
<circle cx="700.91" cy="624.10" r="4" fill="#36a2eb"/>
<circle cx="777.27" cy="631.50" r="4" fill="#36a2eb"/>
<circle cx="853.64" cy="618.60" r="4" fill="#36a2eb"/>
<circle cx="930.00" cy="623.70" r="4" fill="#36a2eb"/>
<circle cx="90.00" cy="611.90" r="4" fill="#22b9cf"/>
<circle cx="166.36" cy="611.90" r="4" fill="#22b9cf"/>
<circle cx="242.73" cy="513.00" r="4" fill="#22b9cf"/>
<circle cx="319.09" cy="611.90" r="4" fill="#22b9cf"/>
<circle cx="395.45" cy="611.90" r="4" fill="#22b9cf"/>
<circle cx="471.82" cy="611.90" r="4" fill="#22b9cf"/>
<circle cx="548.18" cy="611.90" r="4" fill="#22b9cf"/>
<circle cx="624.55" cy="526.30" r="4" fill="#22b9cf"/>
<circle cx="700.91" cy="611.90" r="4" fill="#22b9cf"/>
<circle cx="777.27" cy="612.00" r="4" fill="#22b9cf"/>
<circle cx="853.64" cy="612.00" r="4" fill="#22b9cf"/>
<circle cx="930.00" cy="612.00" r="4" fill="#22b9cf"/>
</svg>
<div style="position:absolute;left:-528.00px;width:600px;text-align:right;top:516.72px;font-size:11.2px;line-height:11.2px;color:#9a9a9a;white-space:nowrap;">3900.00€</div>
<div style="position:absolute;left:-528.00px;width:600px;text-align:right;top:628.42px;font-size:11.2px;line-height:11.2px;color:#9a9a9a;white-space:nowrap;">2000.00€</div>
<div style="position:absolute;left:-528.00px;width:600px;text-align:right;top:692.82px;font-size:11.2px;line-height:11.2px;color:#9a9a9a;white-space:nowrap;">1000.00€</div>
<div style="position:absolute;left:-528.00px;width:600px;text-align:right;top:756.62px;font-size:11.2px;line-height:11.2px;color:#9a9a9a;white-space:nowrap;">0.00€</div>
<div style="position:absolute;left:-210.00px;width:600px;text-align:center;top:780.63px;font-size:11.9px;line-height:11.9px;color:#9a9a9a;white-space:nowrap;">October</div>
<div style="position:absolute;left:-133.64px;width:600px;text-align:center;top:780.63px;font-size:11.9px;line-height:11.9px;color:#9a9a9a;white-space:nowrap;">November</div>
<div style="position:absolute;left:-57.27px;width:600px;text-align:center;top:780.63px;font-size:11.9px;line-height:11.9px;color:#9a9a9a;white-space:nowrap;">December</div>
<div style="position:absolute;left:19.09px;width:600px;text-align:center;top:780.63px;font-size:11.9px;line-height:11.9px;color:#9a9a9a;white-space:nowrap;">January</div>
<div style="position:absolute;left:95.45px;width:600px;text-align:center;top:780.63px;font-size:11.9px;line-height:11.9px;color:#9a9a9a;white-space:nowrap;">February</div>
<div style="position:absolute;left:171.82px;width:600px;text-align:center;top:780.63px;font-size:11.9px;line-height:11.9px;color:#9a9a9a;white-space:nowrap;">March</div>
<div style="position:absolute;left:248.18px;width:600px;text-align:center;top:780.63px;font-size:11.9px;line-height:11.9px;color:#9a9a9a;white-space:nowrap;">April</div>
<div style="position:absolute;left:324.55px;width:600px;text-align:center;top:780.63px;font-size:11.9px;line-height:11.9px;color:#9a9a9a;white-space:nowrap;">May</div>
<div style="position:absolute;left:400.91px;width:600px;text-align:center;top:780.63px;font-size:11.9px;line-height:11.9px;color:#9a9a9a;white-space:nowrap;">June</div>
<div style="position:absolute;left:477.27px;width:600px;text-align:center;top:780.63px;font-size:11.9px;line-height:11.9px;color:#9a9a9a;white-space:nowrap;">July</div>
<div style="position:absolute;left:330.00px;width:600px;text-align:right;top:780.63px;font-size:11.9px;line-height:11.9px;color:#9a9a9a;white-space:nowrap;">September</div>
<div style="position:absolute;left:946px;top:368.5px;width:300px;height:413px;overflow:hidden;border-left:1px solid #3c3c3c;"></div>
<div style="position:absolute;left:946px;top:368px;width:300px;height:413px;overflow:hidden;">
<div style="position:absolute;left:0;top:0;width:300px;height:1px;background:#3c3c3c"></div>
<div style="position:absolute;left:0;top:0;width:1px;height:413px;background:#3c3c3c"></div>
</div>
<div style="position:absolute;left:946px;top:368px;width:300px;height:413px;overflow:hidden;">
<div style="position:absolute;left:0;top:36.00px;width:300px;height:36.72px;background:#2e2e2e;border-top:1px solid #3c3c3c;box-sizing:border-box;border-right:1px solid #3c3c3c;"></div>
<div style="position:absolute;left:0;top:72.72px;width:300px;height:36.72px;background:#242424;border-top:1px solid #3c3c3c;box-sizing:border-box;border-right:1px solid #3c3c3c;"></div>
<div style="position:absolute;left:0;top:109.44px;width:300px;height:36.72px;background:#2e2e2e;border-top:1px solid #3c3c3c;box-sizing:border-box;border-right:1px solid #3c3c3c;"></div>
<div style="position:absolute;left:0;top:146.16px;width:300px;height:36.72px;background:#242424;border-top:1px solid #3c3c3c;box-sizing:border-box;border-right:1px solid #3c3c3c;"></div>
<div style="position:absolute;left:0;top:182.88px;width:300px;height:36.72px;background:#2e2e2e;border-top:1px solid #3c3c3c;box-sizing:border-box;border-right:1px solid #3c3c3c;"></div>
<div style="position:absolute;left:0;top:219.60px;width:300px;height:36.72px;background:#242424;border-top:1px solid #3c3c3c;box-sizing:border-box;border-right:1px solid #3c3c3c;"></div>
<div style="position:absolute;left:0;top:256.32px;width:300px;height:36.72px;background:#2e2e2e;border-top:1px solid #3c3c3c;box-sizing:border-box;border-right:1px solid #3c3c3c;"></div>
<div style="position:absolute;left:0;top:293.04px;width:300px;height:36.72px;background:#242424;border-top:1px solid #3c3c3c;box-sizing:border-box;border-right:1px solid #3c3c3c;"></div>
<div style="position:absolute;left:0;top:329.76px;width:300px;height:36.72px;background:#2e2e2e;border-top:1px solid #3c3c3c;box-sizing:border-box;border-right:1px solid #3c3c3c;"></div>
<div style="position:absolute;left:0;top:366.48px;width:300px;height:36.72px;background:#242424;border-top:1px solid #3c3c3c;box-sizing:border-box;border-right:1px solid #3c3c3c;"></div>
<div style="position:absolute;left:0;top:403.20px;width:300px;height:36.72px;background:#2e2e2e;border-top:1px solid #3c3c3c;box-sizing:border-box;border-right:1px solid #3c3c3c;"></div>
<div style="position:absolute;left:0;top:0;width:300px;height:1px;background:#3c3c3c"></div>
<div style="position:absolute;left:0;top:0;width:1px;height:413px;background:#3c3c3c"></div>
</div>
<div style="position:absolute;left:957.60px;top:380.54px;font-size:14.25px;line-height:14.25px;color:#e0e0e0;font-weight:bold;white-space:nowrap;">Amount</div>
<div style="position:absolute;left:1065.50px;top:380.54px;font-size:14.25px;line-height:14.25px;color:#e0e0e0;font-weight:bold;white-space:nowrap;">Name</div>
<div style="position:absolute;left:957.60px;top:417.19px;font-size:13.6px;line-height:13.6px;color:#ff6b6b;white-space:nowrap;">-62.00€</div>
<div style="position:absolute;left:1065.50px;top:417.19px;font-size:13.6px;line-height:13.6px;color:#dcdcdc;white-space:nowrap;">Upkeep 25</div>
<div style="position:absolute;left:957.60px;top:453.91px;font-size:13.6px;line-height:13.6px;color:#ff6b6b;white-space:nowrap;">-26.00€</div>
<div style="position:absolute;left:1065.50px;top:453.91px;font-size:13.6px;line-height:13.6px;color:#dcdcdc;white-space:nowrap;">Activities 25</div>
<div style="position:absolute;left:957.60px;top:490.63px;font-size:13.6px;line-height:13.6px;color:#ff6b6b;white-space:nowrap;">-42.00€</div>
<div style="position:absolute;left:1065.50px;top:490.63px;font-size:13.6px;line-height:13.6px;color:#dcdcdc;white-space:nowrap;">Clothes 24</div>
<div style="position:absolute;left:957.60px;top:527.35px;font-size:13.6px;line-height:13.6px;color:#ff6b6b;white-space:nowrap;">-25.00€</div>
<div style="position:absolute;left:1065.50px;top:527.35px;font-size:13.6px;line-height:13.6px;color:#dcdcdc;white-space:nowrap;">Cash 21</div>
<div style="position:absolute;left:957.60px;top:564.07px;font-size:13.6px;line-height:13.6px;color:#ff6b6b;white-space:nowrap;">-24.00€</div>
<div style="position:absolute;left:1065.50px;top:564.07px;font-size:13.6px;line-height:13.6px;color:#dcdcdc;white-space:nowrap;">Rent 20</div>
<div style="position:absolute;left:957.60px;top:600.79px;font-size:13.6px;line-height:13.6px;color:#ff6b6b;white-space:nowrap;">-8.00€</div>
<div style="position:absolute;left:1065.50px;top:600.79px;font-size:13.6px;line-height:13.6px;color:#dcdcdc;white-space:nowrap;">Gifts 17</div>
<div style="position:absolute;left:957.60px;top:637.51px;font-size:13.6px;line-height:13.6px;color:#ff6b6b;white-space:nowrap;">-16.00€</div>
<div style="position:absolute;left:1065.50px;top:637.51px;font-size:13.6px;line-height:13.6px;color:#dcdcdc;white-space:nowrap;">Cash 17</div>
<div style="position:absolute;left:957.60px;top:674.23px;font-size:13.6px;line-height:13.6px;color:#ff6b6b;white-space:nowrap;">-35.00€</div>
<div style="position:absolute;left:1065.50px;top:674.23px;font-size:13.6px;line-height:13.6px;color:#dcdcdc;white-space:nowrap;">Rent 13</div>
<div style="position:absolute;left:957.60px;top:710.95px;font-size:13.6px;line-height:13.6px;color:#ff6b6b;white-space:nowrap;">-46.00€</div>
<div style="position:absolute;left:1065.50px;top:710.95px;font-size:13.6px;line-height:13.6px;color:#dcdcdc;white-space:nowrap;">Socializing 12</div>
<div style="position:absolute;left:957.60px;top:747.67px;font-size:13.6px;line-height:13.6px;color:#ff6b6b;white-space:nowrap;">-4.00€</div>
<div style="position:absolute;left:1065.50px;top:747.67px;font-size:13.6px;line-height:13.6px;color:#dcdcdc;white-space:nowrap;">Clothes 11</div>
</body></html>
